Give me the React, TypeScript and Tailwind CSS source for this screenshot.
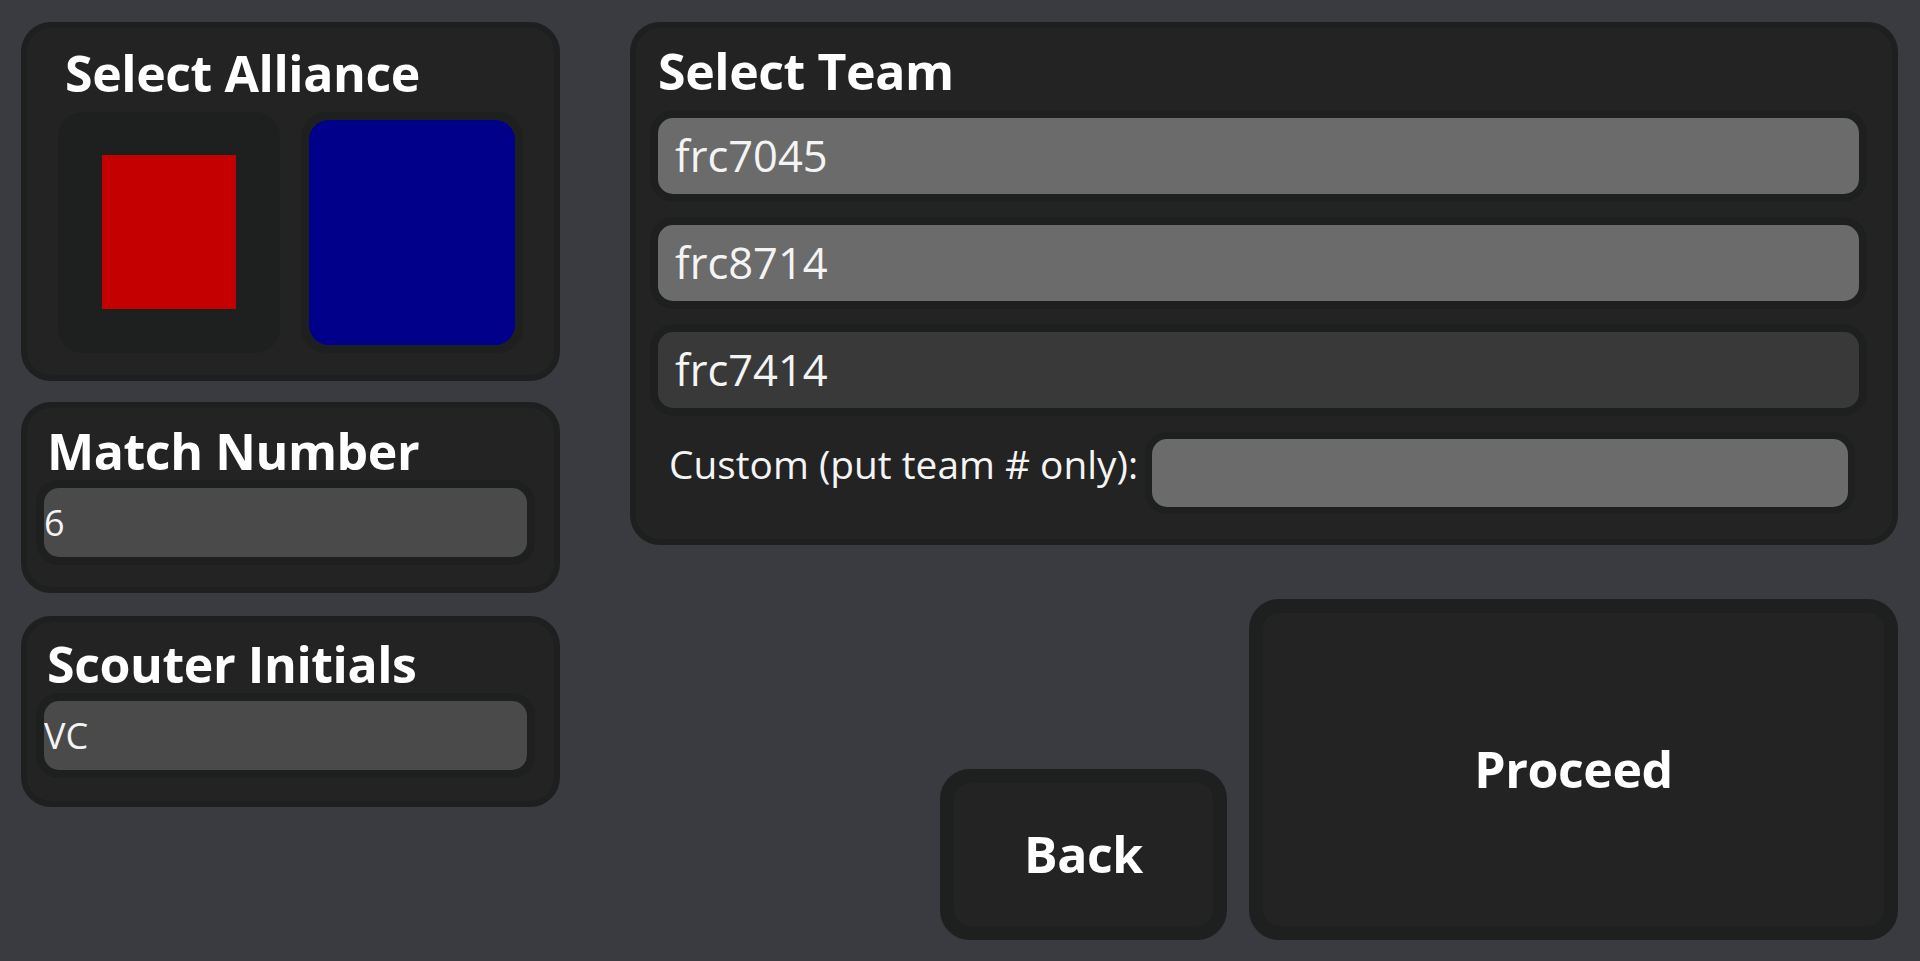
import React from "react";

function TeamOption({ label, active }: { label: string; active: boolean }) {
  return (
    <div className="ml-[14px] mr-[25px] rounded-[24px] border-[8px] border-[#1e1f1f] bg-[#1e1f1f]">
      <div
        className={
          "flex h-[76px] items-center rounded-[15px] pl-[17px] text-[43.5px] text-[#f4f4f4] " +
          (active ? "bg-[#6b6b6b]" : "bg-[#393939]")
        }
      >
        {label}
      </div>
    </div>
  );
}

function LeftInput({ value }: { value: string }) {
  return (
    <div className="ml-[9px] mr-[19px] rounded-[23px] border-[8px] border-[#1e1f1f] bg-[#1e1f1f]">
      <input
        readOnly
        value={value}
        className="block h-[69px] w-full rounded-[15px] bg-[#4a4a4a] p-0 text-[36px] text-[#f4f4f4] outline-none"
      />
    </div>
  );
}

export default function App() {
  return (
    <div className="flex h-screen w-full gap-[70px] overflow-hidden bg-[#3a3b40] pb-[21px] pl-[21px] pr-[22px] pt-[22px] font-['Open_Sans',sans-serif] text-white">
      {/* Left column */}
      <div className="flex w-[539px] shrink-0 flex-col">
        {/* Select Alliance */}
        <div className="h-[359px] rounded-[30px] border-[6px] border-[#1e1f1f] bg-[#232323] px-[31px]">
          <h2 className="ml-[7px] mt-[20px] h-[51px] text-[50px] font-bold leading-[51px] tracking-[-0.4px]">Select Alliance</h2>
          <div className="mt-[13px] flex gap-[21px]">
            <button className="h-[241px] w-[222px] rounded-[25px] bg-[#1e1f1f] pb-[44px] pl-[44px] pr-[44px] pt-[43px]">
              <div className="h-full w-full bg-[#c50000]" />
            </button>
            <button className="h-[241px] w-[222px] rounded-[25px] bg-[#1e1f1f] p-[8px]">
              <div className="h-full w-full rounded-[20px] bg-[#00008b]" />
            </button>
          </div>
        </div>

        {/* Match Number */}
        <div className="mt-[21px] h-[191px] rounded-[30px] border-[6px] border-[#1e1f1f] bg-[#232323]">
          <h2 className="ml-[20px] mt-[18px] h-[51px] text-[50px] font-bold leading-[51px] tracking-[-0.4px]">Match Number</h2>
          <div className="mt-[3px]">
            <LeftInput value="6" />
          </div>
        </div>

        {/* Scouter Initials */}
        <div className="mt-[23px] h-[191px] rounded-[30px] border-[6px] border-[#1e1f1f] bg-[#232323]">
          <h2 className="ml-[20px] mt-[17px] h-[51px] text-[50px] font-bold leading-[51px] tracking-[-0.4px]">Scouter Initials</h2>
          <div className="mt-[3px]">
            <LeftInput value="VC" />
          </div>
        </div>
      </div>

      {/* Right column */}
      <div className="flex min-w-0 flex-1 flex-col">
        <div className="h-[523px] rounded-[30px] border-[6px] border-[#1e1f1f] bg-[#232323]">
          <h2 className="ml-[22px] mt-[18px] h-[51px] text-[50px] font-bold leading-[51px] tracking-[-0.4px]">Select Team</h2>
          <div className="mt-[13px] flex flex-col gap-[15px]">
            <TeamOption label="frc7045" active />
            <TeamOption label="frc8714" active />
            <TeamOption label="frc7414" active={false} />
          </div>
          <div className="ml-[33px] mr-[37px] mt-[16px] flex items-start gap-[7px]">
            <span className="mt-[3px] whitespace-nowrap text-[38.8px] text-[#f4f4f4]">Custom (put team # only):</span>
            <div className="flex-1 rounded-[22px] border-[7px] border-[#1e1f1f] bg-[#1e1f1f]">
              <input readOnly value="" className="block h-[68px] w-full rounded-[15px] bg-[#6b6b6b] outline-none" />
            </div>
          </div>
        </div>

        <div className="flex flex-1 items-end justify-end gap-[22px]">
          <button className="flex h-[171px] w-[287px] items-center justify-center rounded-[30px] border-[14px] border-[#1e1f1f] bg-[#232323] text-[50px] font-bold tracking-[-0.4px] text-white">
            Back
          </button>
          <button className="flex h-[341px] w-[649px] items-center justify-center rounded-[30px] border-[14px] border-[#1e1f1f] bg-[#232323] text-[50px] font-bold tracking-[-0.4px] text-white">
            Proceed
          </button>
        </div>
      </div>
    </div>
  );
}
